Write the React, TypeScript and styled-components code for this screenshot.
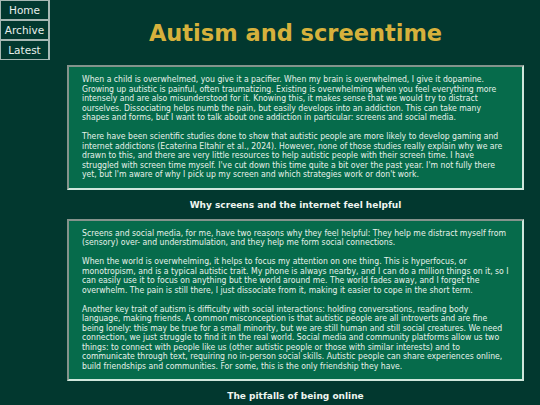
import React from "react";
import styled, { createGlobalStyle } from "styled-components";

const Global = createGlobalStyle`
  html, body { margin: 0; padding: 0; background: #02382f; }
  body { font-family: "DejaVu Sans", Verdana, sans-serif; color: #e6f2ea; }
`;

const Nav = styled.nav`
  position: fixed;
  top: 0;
  left: 0;
  display: flex;
  flex-direction: column;
  width: 50px;
`;

const NavLink = styled.a`
  display: block;
  box-sizing: border-box;
  height: 20px;
  border: 1px solid #a7b8b4;
  border-width: 1px 2px 1px 1px;
  color: #e8f0ec;
  font-size: 10.5px;
  line-height: 18px;
  text-align: center;
  text-decoration: none;
  background: #02382f;
`;

const Main = styled.main`
  margin-left: 50px;
  padding: 0 16px 20px 17px;
`;

const Title = styled.h1`
  margin: 0;
  padding: 20px 0 19px;
  text-align: center;
  font-size: 22.5px;
  line-height: 26px;
  font-weight: bold;
  color: #d6b13c;
`;

const Card = styled.section`
  background: #066b4b;
  border: 2px inset #cfe7dc;
  padding: 8px 13px;
  font-family: "DejaVu Sans Condensed", "DejaVu Sans", sans-serif;
  font-size: 8.6px;
  line-height: 9.5px;
`;

const Para = styled.p`
  margin: 0 0 9.5px;
  &:last-child { margin-bottom: 0; }
`;

const Heading = styled.h2`
  margin: 0;
  padding: 9px 0 8px;
  text-align: center;
  font-size: 9px;
  line-height: 12px;
  font-weight: bold;
  color: #eef5f0;
`;

export default function App() {
  return (
    <>
      <Global />
      <Nav>
        <NavLink href="#">Home</NavLink>
        <NavLink href="#">Archive</NavLink>
        <NavLink href="#">Latest</NavLink>
      </Nav>
      <Main>
        <Title>Autism and screentime</Title>
        <Card>
          <Para>
            When a child is overwhelmed, you give it a pacifier. When my brain is overwhelmed, I give it dopamine. Growing up autistic is painful, often traumatizing. Existing is overwhelming when you feel everything more intensely and are also misunderstood for it. Knowing this, it makes sense that we would try to distract ourselves. Dissociating helps numb the pain, but easily develops into an addiction. This can take many shapes and forms, but I want to talk about one addiction in particular: screens and social media.
          </Para>
          <Para>
            There have been scientific studies done to show that autistic people are more likely to develop gaming and internet addictions (Ecaterina Eltahir et al., 2024). However, none of those studies really explain why we are drawn to this, and there are very little resources to help autistic people with their screen time. I have struggled with screen time myself. I've cut down this time quite a bit over the past year. I'm not fully there yet, but I'm aware of why I pick up my screen and which strategies work or don't work.
          </Para>
        </Card>
        <Heading>Why screens and the internet feel helpful</Heading>
        <Card>
          <Para>
            Screens and social media, for me, have two reasons why they feel helpful: They help me distract myself from (sensory) over- and understimulation, and they help me form social connections.
          </Para>
          <Para>
            When the world is overwhelming, it helps to focus my attention on one thing. This is hyperfocus, or monotropism, and is a typical autistic trait. My phone is always nearby, and I can do a million things on it, so I can easily use it to focus on anything but the world around me. The world fades away, and I forget the overwhelm. The pain is still there, I just dissociate from it, making it easier to cope in the short term.
          </Para>
          <Para>
            Another key trait of autism is difficulty with social interactions: holding conversations, reading body language, making friends. A common misconception is that autistic people are all introverts and are fine being lonely: this may be true for a small minority, but we are still human and still social creatures. We need connection, we just struggle to find it in the real world. Social media and community platforms allow us two things: to connect with people like us (other autistic people or those with similar interests) and to communicate through text, requiring no in-person social skills. Autistic people can share experiences online, build friendships and communities. For some, this is the only friendship they have.
          </Para>
        </Card>
        <Heading>The pitfalls of being online</Heading>
      </Main>
    </>
  );
}
